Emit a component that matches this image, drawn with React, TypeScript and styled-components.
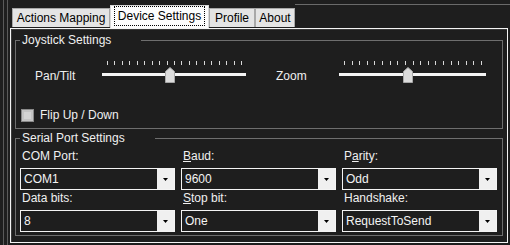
import React from 'react';
import styled, { createGlobalStyle } from 'styled-components';

const Global = createGlobalStyle`
  html, body { margin: 0; padding: 0; background: #1e1e1e; }
  body { font-family: "Liberation Sans", Arial, sans-serif; font-size: 12px; color: #f0f0f0; }
  * { box-sizing: border-box; }
`;

const Window = styled.div`
  width: 510px;
  height: 245px;
  overflow: hidden;
  background: #1e1e1e;
  padding-left: 3px;
  display: flex;
`;

const OuterEdge = styled.div`
  flex: 1;
  display: flex;
  border-left: 1px solid #5a5a5a;
  padding-left: 3px;
`;

const InnerEdge = styled.div`
  flex: 1;
  display: flex;
  flex-direction: column;
  border-left: 1px solid #5a5a5a;
`;

const TabRow = styled.div`
  height: 28px;
  display: flex;
  align-items: flex-end;
  padding-left: 4px;
`;

const TabList = styled.div`
  display: flex;
  align-items: flex-end;
  height: 100%;
`;

const Tab = styled.div<{ $active?: boolean; $w: number }>`
  width: ${(p) => p.$w}px;
  height: ${(p) => (p.$active ? 23 : 19)}px;
  margin-bottom: ${(p) => (p.$active ? 0 : 1)}px;
  background: ${(p) => (p.$active ? '#fcfcfc' : '#e4e4e4')};
  border: 1px solid ${(p) => (p.$active ? '#d8d8d8' : '#a8a8a8')};
  border-bottom: none;
  color: #000;
  display: flex;
  align-items: center;
  justify-content: center;
  font-size: 12px;
  line-height: 14px;
  padding-bottom: ${(p) => (p.$active ? 2 : 0)}px;
`;

const FocusText = styled.span`
  outline: 1px dotted #000;
  outline-offset: 0;
  padding: 2px 3px 2px;
`;

const TopLine = styled.div`
  flex: 1;
  align-self: flex-start;
  margin-top: 4px;
  border-top: 1px solid #6a6a6a;
`;

const Panel = styled.div`
  margin-left: 2px;
  width: 498px;
  height: 215px;
  border: 1px solid #f4f4f4;
  box-shadow: inset 1px 1px 0 #3a3a3a;
  padding: 0 4px;
  display: flex;
  flex-direction: column;
`;

const Group = styled.fieldset<{ $h: number; $mt: number }>`
  margin: ${(p) => p.$mt}px 0 0 0;
  padding: 0;
  min-width: 0;
  height: ${(p) => p.$h}px;
  border: 1px solid #6e6e6e;
  display: flex;
  flex-direction: column;
`;

const Legend = styled.legend`
  margin-left: 4px;
  padding: 0 30px 0 2px;
  font-size: 12px;
  line-height: 14px;
  color: #f0f0f0;
`;

const SliderRow = styled.div`
  display: flex;
  align-items: flex-start;
  margin-top: 13px;
  padding-left: 19px;
`;

const SliderLabel = styled.div<{ $w: number; $ml?: number }>`
  width: ${(p) => p.$w}px;
  margin-left: ${(p) => p.$ml ?? 0}px;
  padding-top: 9px;
  line-height: 14px;
`;

const SliderBox = styled.div<{ $w: number }>`
  position: relative;
  width: ${(p) => p.$w}px;
  height: 24px;
`;

const Ticks = styled.svg`
  display: block;
  margin-top: 1px;
`;

const Track = styled.div`
  margin-top: 8px;
  height: 3px;
  background: #f4f4f4;
`;

const Thumb = styled.svg`
  position: absolute;
  top: 7px;
`;

const CheckRow = styled.label`
  display: flex;
  align-items: center;
  gap: 6px;
  margin-top: 24px;
  padding-left: 5px;
  line-height: 14px;
`;

const CheckBox = styled.span`
  width: 13px;
  height: 13px;
  border: 1px solid #8a8a8a;
  background: #d4d4d4;
  box-shadow: inset 0 0 0 2px #c4c4c4;
`;

const FieldGrid = styled.div`
  display: grid;
  grid-template-columns: 155px 155px 155px;
  column-gap: 6px;
  row-gap: 1px;
  padding: 4px 0 0 4px;
`;

const Field = styled.div`
  display: flex;
  flex-direction: column;
`;

const FieldLabel = styled.div`
  height: 15px;
  line-height: 14px;
  margin-bottom: 4px;
  padding-left: 2px;
`;

const Combo = styled.div`
  height: 22px;
  border: 1px solid #f4f4f4;
  background: #1e1e1e;
  display: flex;
  align-items: stretch;
`;

const ComboText = styled.div`
  flex: 1;
  padding-left: 3px;
  display: flex;
  align-items: center;
  color: #f4f4f4;
  font-size: 12px;
`;

const ComboButton = styled.div`
  width: 17px;
  background: #f0f0f0;
  display: flex;
  align-items: center;
  justify-content: center;
`;

function Slider({ width, value }: { width: number; value: number }) {
  const n = 19;
  const start = 5;
  const span = width - 10;
  const ticks = Array.from({ length: n }, (_, i) => Math.round(start + (span * i) / (n - 1)) + 0.5);
  const cx = start + span * value;
  return (
    <SliderBox $w={width}>
      <Ticks width={width} height={4}>
        {ticks.map((x, i) => (
          <line key={i} x1={x} x2={x} y1={0} y2={4} stroke="#d8d8d8" strokeWidth={1} />
        ))}
      </Ticks>
      <Track />
      <Thumb width={10} height={16} style={{ left: Math.round(cx - 5) }}>
        <path d="M0.5 4.5 L5 0.5 L9.5 4.5 L9.5 15.5 L0.5 15.5 Z" fill="#dcdcdc" stroke="#a8a8a8" />
      </Thumb>
    </SliderBox>
  );
}

function ComboBox({ value }: { value: string }) {
  return (
    <Combo>
      <ComboText>{value}</ComboText>
      <ComboButton>
        <svg width="5" height="3">
          <path d="M0 0 H5 L2.5 3 Z" fill="#000" />
        </svg>
      </ComboButton>
    </Combo>
  );
}

export default function App() {
  return (
    <>
      <Global />
      <Window>
        <OuterEdge>
          <InnerEdge>
            <TabRow>
              <TabList>
                <Tab $w={98}>Actions Mapping</Tab>
                <Tab $w={99} $active>
                  <FocusText>Device Settings</FocusText>
                </Tab>
                <Tab $w={46}>Profile</Tab>
                <Tab $w={40}>About</Tab>
              </TabList>
              <TopLine />
            </TabRow>
            <Panel>
              <Group $h={96} $mt={4}>
                <Legend>Joystick Settings</Legend>
                <SliderRow>
                  <SliderLabel $w={67}>Pan/Tilt</SliderLabel>
                  <Slider width={144} value={0.47} />
                  <SliderLabel $w={63} $ml={30}>Zoom</SliderLabel>
                  <Slider width={147} value={0.467} />
                </SliderRow>
                <CheckRow>
                  <CheckBox />
                  Flip Up / Down
                </CheckRow>
              </Group>
              <Group $h={105} $mt={2}>
                <Legend>Serial Port Settings</Legend>
                <FieldGrid>
                  <Field>
                    <FieldLabel>COM Port:</FieldLabel>
                    <ComboBox value="COM1" />
                  </Field>
                  <Field>
                    <FieldLabel><u>B</u>aud:</FieldLabel>
                    <ComboBox value="9600" />
                  </Field>
                  <Field>
                    <FieldLabel>P<u>a</u>rity:</FieldLabel>
                    <ComboBox value="Odd" />
                  </Field>
                  <Field>
                    <FieldLabel>Data bits:</FieldLabel>
                    <ComboBox value="8" />
                  </Field>
                  <Field>
                    <FieldLabel><u>S</u>top bit:</FieldLabel>
                    <ComboBox value="One" />
                  </Field>
                  <Field>
                    <FieldLabel>Handshake:</FieldLabel>
                    <ComboBox value="RequestToSend" />
                  </Field>
                </FieldGrid>
              </Group>
            </Panel>
          </InnerEdge>
        </OuterEdge>
      </Window>
    </>
  );
}
